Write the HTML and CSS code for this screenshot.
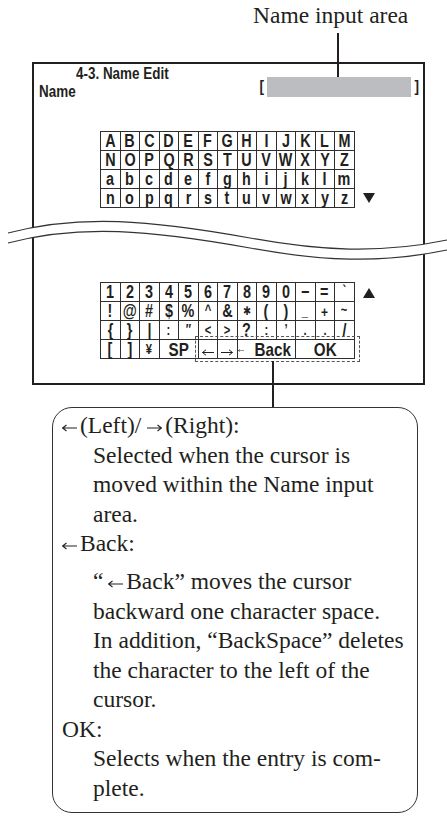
FILE: index.html
```html
<!DOCTYPE html>
<html lang="en">
<head>
  <meta charset="UTF-8" />
  <title>4-3. Name Edit</title>
  <link rel="stylesheet" href="styles.css">
</head>
<body>
  <div class="page">

    <div class="caption">Name input area</div>

    <!-- Screen -->
    <div class="screen">
      <div class="screen-head">
        <div class="titles">
          <div class="menu-title"><b>4-3. Name Edit</b></div>
          <div class="field-label"><b>Name</b></div>
        </div>
        <div class="name-field">
          <b>[</b>
          <span class="name-bar"></span>
          <b>]</b>
        </div>
      </div>

      <div class="keys-row letters">
        <div class="keys">
          <span><b>A</b></span><span><b>B</b></span><span><b>C</b></span><span><b>D</b></span><span><b>E</b></span><span><b>F</b></span><span><b>G</b></span><span><b>H</b></span><span><b>I</b></span><span><b>J</b></span><span><b>K</b></span><span><b>L</b></span><span><b>M</b></span>
          <span><b>N</b></span><span><b>O</b></span><span><b>P</b></span><span><b>Q</b></span><span><b>R</b></span><span><b>S</b></span><span><b>T</b></span><span><b>U</b></span><span><b>V</b></span><span><b>W</b></span><span><b>X</b></span><span><b>Y</b></span><span><b>Z</b></span>
          <span><b>a</b></span><span><b>b</b></span><span><b>c</b></span><span><b>d</b></span><span><b>e</b></span><span><b>f</b></span><span><b>g</b></span><span><b>h</b></span><span><b>i</b></span><span><b>j</b></span><span><b>k</b></span><span><b>l</b></span><span><b>m</b></span>
          <span><b>n</b></span><span><b>o</b></span><span><b>p</b></span><span><b>q</b></span><span><b>r</b></span><span><b>s</b></span><span><b>t</b></span><span><b>u</b></span><span><b>v</b></span><span><b>w</b></span><span><b>x</b></span><span><b>y</b></span><span><b>z</b></span>
        </div>
        <svg class="scroll scroll-down" width="12" height="10" viewBox="0 0 12 10"><polygon points="0,0 12,0 6,10" /></svg>
      </div>

      <div class="keys-row symbols">
        <div class="keys">
          <span><b>1</b></span><span><b>2</b></span><span><b>3</b></span><span><b>4</b></span><span><b>5</b></span><span><b>6</b></span><span><b>7</b></span><span><b>8</b></span><span><b>9</b></span><span><b>0</b></span><span><b>&minus;</b></span><span><b>=</b></span><span class="hi small"><b>`</b></span>
          <span><b>!</b></span><span><b>@</b></span><span><b>#</b></span><span><b>$</b></span><span><b>%</b></span><span class="hi small"><b>^</b></span><span><b>&amp;</b></span><span class="star"><b>&#10033;</b></span><span><b>(</b></span><span><b>)</b></span><span class="lo small"><b>_</b></span><span class="plus"><b>+</b></span><span class="hi small"><b>~</b></span>
          <span><b>{</b></span><span><b>}</b></span><span><b>|</b></span><span class="small"><b>:</b></span><span class="hi small"><b>&Prime;</b></span><span class="lo small"><b>&lt;</b></span><span class="lo small"><b>&gt;</b></span><span><b>?</b></span><span class="small"><b>:</b></span><span class="hi small"><b>&rsquo;</b></span><span class="lo small"><b>.</b></span><span class="lo small"><b>.</b></span><span><b>/</b></span>
          <span><b>[</b></span><span><b>]</b></span><span class="small"><b>&yen;</b></span><span class="span2"><b>SP</b></span>
          <span class="lo"><svg class="key-arrow" width="12" height="7" viewBox="0 0 12 7"><path d="M0.5,3.5 H12 M4,0.8 L0.5,3.5 L4,6.2" /></svg></span>
          <span class="lo"><svg class="key-arrow" width="12" height="7" viewBox="0 0 12 7"><path d="M0,3.5 H11.5 M8,0.8 L11.5,3.5 L8,6.2" /></svg></span>
          <span class="span3"><svg class="key-arrow" width="14" height="7" viewBox="0 0 14 7"><path d="M0.5,3.5 H14 M4,0.8 L0.5,3.5 L4,6.2" /></svg>&nbsp;<b>Back</b></span>
          <span class="span3"><b>OK</b></span>
        </div>
        <div class="select-box"></div>
        <svg class="scroll scroll-up" width="12" height="10" viewBox="0 0 12 10"><polygon points="0,10 12,10 6,0" /></svg>
      </div>

      <svg class="wave" width="447" height="60" viewBox="0 200 447 60">
        <path class="wave-fill" d="M8,233 C80,214 150,220 250,238 C320,251 380,254 447,240 L447,250 C380,264 320,261 250,248 C150,230 80,224 8,243 Z" />
        <path class="wave-line" d="M8,233 C80,214 150,220 250,238 C320,251 380,254 447,240" />
        <path class="wave-line" d="M8,243 C80,224 150,230 250,248 C320,261 380,264 447,250" />
      </svg>
    </div>

    <!-- Callout -->
    <div class="callout">
      <p class="term"><svg class="arr" width="15" height="8" viewBox="0 0 15 8"><path d="M0.5,4 H15 M4.5,1 L0.5,4 L4.5,7" /></svg>(Left)/ <svg class="arr" width="15" height="8" viewBox="0 0 15 8"><path d="M0,4 H14.5 M10.5,1 L14.5,4 L10.5,7" /></svg>(Right):</p>
      <p class="desc">Selected when the cursor is<br>moved within the Name input<br>area.</p>
      <p class="term"><svg class="arr" width="15" height="8" viewBox="0 0 15 8"><path d="M0.5,4 H15 M4.5,1 L0.5,4 L4.5,7" /></svg>Back:</p>
      <p class="desc spaced">&ldquo;&thinsp;<svg class="arr" width="15" height="8" viewBox="0 0 15 8"><path d="M0.5,4 H15 M4.5,1 L0.5,4 L4.5,7" /></svg>Back&rdquo; moves the cursor<br>backward one character space.<br>In addition, &ldquo;BackSpace&rdquo; deletes<br>the character to the left of the<br>cursor.</p>
      <p class="term">OK:</p>
      <p class="desc">Selects when the entry is com-<br>plete.</p>
    </div>

    <span class="leader leader-name"></span>
    <span class="leader leader-keys"></span>
  </div>
</body>
</html>
```

FILE: styles.css
```css
* {
  box-sizing: border-box;
  margin: 0;
  padding: 0;
}
body {
  background: #fff;
  color: #231f20;
  font-family: "Liberation Serif", "Times New Roman", serif;
}

.page {
  position: relative;
  width: 447px;
  height: 816px;
  overflow: hidden;
}

/* Top caption */
.caption {
  padding: 2px 0 0 253px;
  font-size: 23.5px;
  line-height: 26px;
  height: 28px;
  margin-bottom: 34px;
}

/* Screen frame */
.screen {
  position: relative;
  margin-left: 32px;
  width: 393px;
  border: 2px solid #231f20;
  padding-bottom: 24px;
  font-family: "Liberation Sans", Arial, sans-serif;
}
/* condensed bold look */
.screen b {
  display: inline-block;
  font-weight: bold;
  transform: scaleX(0.8);
}

.screen-head {
  display: flex;
  justify-content: space-between;
  height: 35px;
}
.titles {
  padding-top: 2px;
  font-size: 16px;
  line-height: 16px;
}
.titles b {
  transform: scaleX(0.84);
  transform-origin: left center;
}
.menu-title {
  margin-left: 42px;
}
.field-label {
  margin: 2px 0 0 5px;
}
.name-field {
  display: flex;
  align-items: center;
  gap: 1px;
  margin: 13px 3px 0 0;
  height: 20px;
  font-size: 17px;
}
.name-bar {
  width: 144px;
  height: 20px;
  margin: 0 2px;
  background: #bcbdc0;
}

/* Key grids */
.keys-row {
  position: relative;
  display: flex;
  align-items: flex-end;
  gap: 8px;
  margin-left: 66px;
}
.letters {
  margin-top: 32px;
}
.symbols {
  margin-top: 74px;
  align-items: flex-start;
}
.keys {
  display: grid;
  grid-template-columns: repeat(13, 18.5px);
  grid-auto-rows: 18px;
  gap: 1px;
  background: #2f2f2f;
  border: 1px solid #2f2f2f;
}
.keys span {
  display: flex;
  align-items: center;
  justify-content: center;
  background: #fff;
  font-size: 18px;
  line-height: 1;
}
.keys .hi {
  align-items: flex-start;
  padding-top: 1px;
}
.keys .lo {
  align-items: flex-end;
  padding-bottom: 2px;
}
.keys .small {
  font-size: 14px;
}
.keys .star {
  font-family: "DejaVu Sans", sans-serif;
  font-size: 12px;
}
.keys .plus {
  font-size: 15px;
}
.keys .span2,
.keys .span3 {
  grid-column: span 3;
  font-size: 19px;
}
.keys .span2 {
  grid-column: span 2;
}
.key-arrow {
  fill: none;
  stroke: #231f20;
  stroke-width: 1;
}
.span3 .key-arrow {
  margin-top: 2px;
}

.scroll {
  fill: #231f20;
  margin-bottom: 5px;
}
.scroll-up {
  margin: 6px 0 0 0;
}

.select-box {
  position: absolute;
  left: 95px;
  top: 54px;
  width: 165px;
  height: 26px;
  border: 1px dashed #555;
}

/* Broken section */
.wave {
  position: absolute;
  left: -34px;
  top: 136px;
}
.wave-fill {
  fill: #fff;
}
.wave-line {
  fill: none;
  stroke: #333;
  stroke-width: 1.2;
}

/* Callout */
.callout {
  margin: 22px 0 0 52px;
  width: 366px;
  height: 406px;
  border: 1.5px solid #333;
  border-radius: 20px;
  padding: 3px 0 0 9px;
  font-size: 23.5px;
  line-height: 29.5px;
}
.arr {
  fill: none;
  stroke: #231f20;
  stroke-width: 1.1;
  vertical-align: middle;
  margin-right: 3px;
}
.desc {
  padding-left: 31px;
}
.desc.spaced {
  margin-top: 8.5px;
}

/* Leader lines */
.leader {
  position: absolute;
  width: 1.5px;
  background: #231f20;
}
.leader-name {
  left: 337px;
  top: 33px;
  height: 44px;
}
.leader-keys {
  left: 272px;
  top: 361px;
  height: 46px;
}
```
